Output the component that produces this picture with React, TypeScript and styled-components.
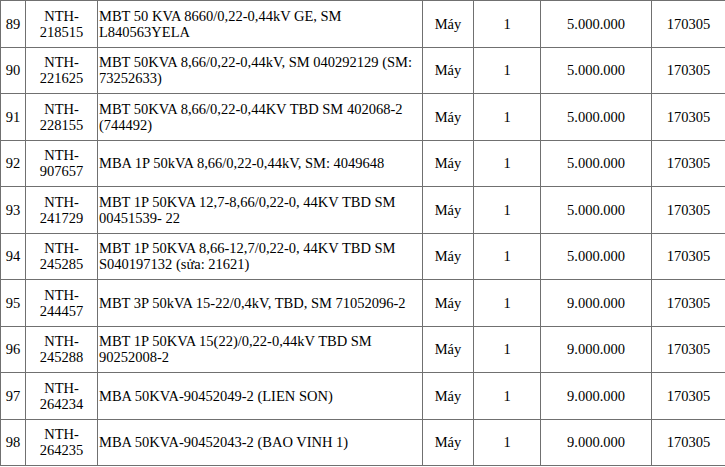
import React from "react";
import styled, { createGlobalStyle } from "styled-components";

const Global = createGlobalStyle`
  html, body { margin: 0; padding: 0; background: #fff; }
  body { font-family: "Liberation Serif", "Times New Roman", serif; color: #000; }
`;

const Table = styled.table`
  border-collapse: collapse;
  table-layout: fixed;
  width: 725px;
  font-size: 14.5px;
  line-height: 16px;
`;

const Col = styled.col<{ $w: number }>`
  width: ${(p) => p.$w}px;
`;

const Row = styled.tr`
  height: 46.5px;
`;

const Cell = styled.td<{ $align?: "left" | "center" }>`
  border: 1px solid #707070;
  padding: 0 0 0 ${(p) => (p.$align === "left" ? "1px" : "0")};
  vertical-align: middle;
  text-align: ${(p) => p.$align ?? "center"};
  overflow: hidden;
`;

const Line = styled.div`
  white-space: nowrap;
`;

type Item = { n: number; code: string; desc: string[]; price: string };

const rows: Item[] = [
  { n: 89, code: "218515", desc: ["MBT 50 KVA 8660/0,22-0,44kV GE, SM", "L840563YELA"], price: "5.000.000" },
  { n: 90, code: "221625", desc: ["MBT 50KVA 8,66/0,22-0,44kV, SM 040292129 (SM:", "73252633)"], price: "5.000.000" },
  { n: 91, code: "228155", desc: ["MBT 50KVA 8,66/0,22-0,44KV TBD SM 402068-2", "(744492)"], price: "5.000.000" },
  { n: 92, code: "907657", desc: ["MBA 1P 50kVA 8,66/0,22-0,44kV, SM: 4049648"], price: "5.000.000" },
  { n: 93, code: "241729", desc: ["MBT 1P 50KVA 12,7-8,66/0,22-0, 44KV TBD SM", "00451539- 22"], price: "5.000.000" },
  { n: 94, code: "245285", desc: ["MBT 1P 50KVA 8,66-12,7/0,22-0, 44KV TBD SM", "S040197132 (sửa: 21621)"], price: "5.000.000" },
  { n: 95, code: "244457", desc: ["MBT 3P 50kVA 15-22/0,4kV, TBD, SM 71052096-2"], price: "9.000.000" },
  { n: 96, code: "245288", desc: ["MBT 1P 50KVA 15(22)/0,22-0,44kV TBD SM", "90252008-2"], price: "9.000.000" },
  { n: 97, code: "264234", desc: ["MBA 50KVA-90452049-2 (LIEN SON)"], price: "9.000.000" },
  { n: 98, code: "264235", desc: ["MBA 50KVA-90452043-2 (BAO VINH 1)"], price: "9.000.000" },
];

const widths = [25, 72, 325, 51, 67, 111, 74];

export default function App() {
  return (
    <>
      <Global />
      <Table>
        <colgroup>
          {widths.map((w, i) => (
            <Col key={i} $w={w} />
          ))}
        </colgroup>
        <tbody>
          {rows.map((r) => (
            <Row key={r.n}>
              <Cell>{r.n}</Cell>
              <Cell>
                <Line>NTH-</Line>
                <Line>{r.code}</Line>
              </Cell>
              <Cell $align="left">
                {r.desc.map((d, i) => (
                  <Line key={i}>{d}</Line>
                ))}
              </Cell>
              <Cell>Máy</Cell>
              <Cell>1</Cell>
              <Cell>{r.price}</Cell>
              <Cell>170305</Cell>
            </Row>
          ))}
        </tbody>
      </Table>
    </>
  );
}
